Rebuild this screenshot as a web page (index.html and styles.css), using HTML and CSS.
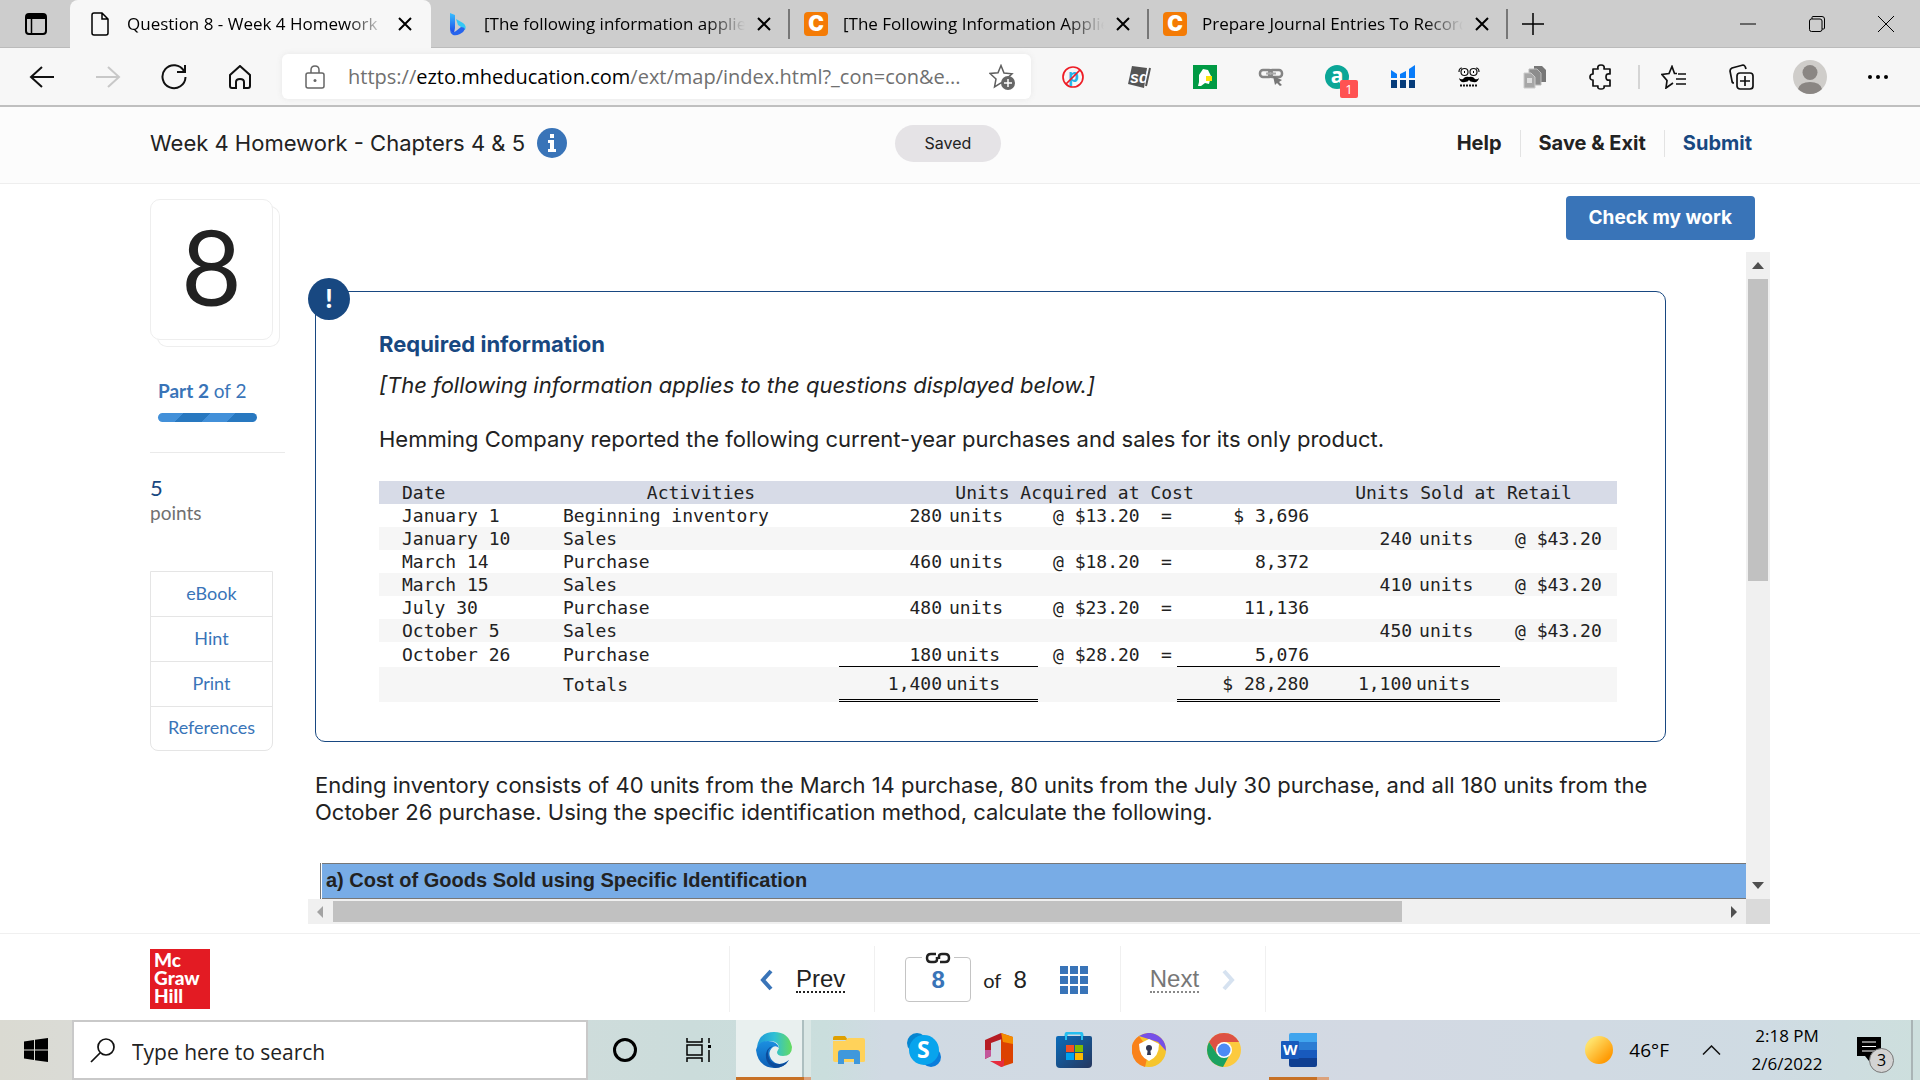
FILE: index.html
```html
<!DOCTYPE html>
<html lang="en">
<head>
  <meta charset="UTF-8">
  <title>Question 8 - Week 4 Homework - Chapters 4 &amp; 5</title>
  <link rel="stylesheet" href="styles.css">
</head>
<body>

  <!-- Browser tabs -->
  <div class="tabstrip">
    <button class="tab-actions" aria-label="Tab actions">
      <svg width="22" height="22" viewBox="0 0 22 22"><rect x="1" y="1" width="20" height="20" rx="3" fill="none" stroke="#000" stroke-width="2"/><path d="M1 1h20v5H1z"/><path d="M6.500 6v15" stroke="#000" stroke-width="1.500"/></svg>
    </button>
    <div class="tab active">
      <svg class="tab-icon" width="20" height="24" viewBox="0 0 20 24"><path d="M2 3q0-2 2-2h8l6 6v14q0 2-2 2H4q-2 0-2-2zM12 1v6h6" fill="none" stroke="#000" stroke-width="1.500"/></svg>
      <span class="tab-title">Question 8 - Week 4 Homework</span>
      <button class="tab-close" aria-label="Close tab"><svg width="14" height="14" viewBox="0 0 14 14"><path d="M1 1l12 12M13 1L1 13"/></svg></button>
    </div>
    <div class="tab">
      <svg class="tab-icon" width="24" height="24" viewBox="-4 0 24 24"><defs><linearGradient id="bing" x2="0" y2="1"><stop stop-color="#38c0ff"/><stop offset="1" stop-color="#1b48e8"/></linearGradient></defs><path d="M1 1l5 2v13l-1 5q-4-1-4-4z" fill="url(#bing)"/><path d="M7 7l7 4q4 3 2 7-1-2-4-3l-3-2z" fill="#35c8f5"/><path d="M1 18q2 4 6 1l5-4q3 0 4 2-1 3-5 5-4 2-7 1-3-2-3-5z" fill="#2764ed"/></svg>
      <span class="tab-title">[The following information applies</span>
      <button class="tab-close" aria-label="Close tab"><svg width="14" height="14" viewBox="0 0 14 14"><path d="M1 1l12 12M13 1L1 13"/></svg></button>
    </div>
    <div class="tab">
      <span class="chegg">C</span>
      <span class="tab-title">[The Following Information Applies</span>
      <button class="tab-close" aria-label="Close tab"><svg width="14" height="14" viewBox="0 0 14 14"><path d="M1 1l12 12M13 1L1 13"/></svg></button>
    </div>
    <div class="tab">
      <span class="chegg">C</span>
      <span class="tab-title">Prepare Journal Entries To Record</span>
      <button class="tab-close" aria-label="Close tab"><svg width="14" height="14" viewBox="0 0 14 14"><path d="M1 1l12 12M13 1L1 13"/></svg></button>
    </div>
    <button class="new-tab" aria-label="New tab"><svg width="22" height="22" viewBox="0 0 22 22"><path d="M11 0v22M0 11h22" stroke="#000" stroke-width="1.500"/></svg></button>
    <div class="window-buttons">
      <button aria-label="Minimize"><svg width="16" height="16" viewBox="0 0 16 16"><path d="M0 8h16"/></svg></button>
      <button aria-label="Restore"><svg width="16" height="16" viewBox="0 0 16 16"><path d="M3 3V1.500q0-1 1-1h9q2.500 0 2.500 2.500v9q0 1-1 1H13"/><rect x=".5" y="3" width="12.500" height="12.500" rx="2"/></svg></button>
      <button aria-label="Close window"><svg width="16" height="16" viewBox="0 0 16 16"><path d="M0 0l16 16M16 0L0 16"/></svg></button>
    </div>
  </div>

  <!-- Address bar and extensions -->
  <div class="toolbar">
    <div class="nav-buttons">
      <button aria-label="Back"><svg width="26" height="24" viewBox="0 0 26 24"><path d="M25 12H2M13 2L2 12l11 10"/></svg></button>
      <button aria-label="Forward" disabled><svg width="26" height="24" viewBox="0 0 26 24"><path d="M1 12h23M13 2l11 10-11 10"/></svg></button>
      <button aria-label="Refresh"><svg width="26" height="26" viewBox="0 0 26 26"><path d="M23 7A11.500 11.500 0 1 0 24.500 13M24 1v7h-8"/></svg></button>
      <button aria-label="Home"><svg width="24" height="24" viewBox="0 0 24 24"><path d="M2 10L12 1l10 9v11q0 2-2 2h-4v-6q0-3-4-3t-4 3v6H4q-2 0-2-2z"/></svg></button>
    </div>
    <div class="address">
      <svg width="20" height="24" viewBox="0 0 20 24"><g fill="none" stroke="#666" stroke-width="1.500"><rect x="1" y="8" width="18" height="15" rx="2"/><path d="M6 8V5q0-4 4-4t4 4v3"/></g><circle cx="10" cy="15.500" r="1.500" fill="#666"/></svg>
      <span class="url">https://<b>ezto.mheducation.com</b>/ext/map/index.html?_con=con&amp;e...</span>
      <button aria-label="Add to favorites"><svg width="26" height="26" viewBox="0 0 26 26"><path d="M12 1.500l3 7.500 8 .8-6 5.500-5 3.700-6.500 4 1.500-8-6-5.500 8-.8z" fill="none" stroke="#5f5f5f" stroke-width="1.500"/><circle cx="19" cy="19" r="7" fill="#666"/><path d="M19 15v8M15 19h8" stroke="#fff" stroke-width="1.500"/></svg></button>
    </div>
    <div class="extensions">
      <button aria-label="Ad blocker"><svg width="24" height="24" viewBox="0 0 24 24"><text x="7" y="17" class="ext-p">p</text><circle cx="12" cy="12" r="10" fill="none" stroke="#ee1c25" stroke-width="1.700"/><path d="M19 5L5 19" stroke="#ee1c25" stroke-width="1.700"/></svg></button>
      <button aria-label="SD"><svg width="26" height="24" viewBox="0 0 26 24"><path d="M6 1l15 2-3 20-16-4z" fill="#555"/><text x="4" y="18" class="ext-sd">sd</text><path d="M24 3l-4 18" stroke="#555" stroke-width="2"/></svg></button>
      <button aria-label="Tag saver"><svg width="24" height="24" viewBox="0 0 24 24"><path d="M0 0h24v24H0z" fill="#009a44"/><path d="M6 10l4-6 5 1 3 6-2 8-4-1-4 3H5l1-4z" fill="#fff"/><path d="M13 11h6v5h-6z" fill="#fbe30a"/></svg></button>
      <button aria-label="Links"><svg width="26" height="20" viewBox="0 0 26 20"><g fill="none" stroke="#858585" stroke-width="2.500"><rect x="2" y="3" width="12" height="7" rx="3"/><rect x="11" y="3" width="13" height="7" rx="3"/></g><path d="M8 6.500h10" stroke="#aaa" stroke-width="2"/><path d="M15 9l9 4-3 2 3 3-2 1-3-3-2 2z" fill="#777"/></svg></button>
      <button class="ext-a" aria-label="a"><span class="circle-a">a</span><span class="count">1</span></button>
      <button aria-label="Statistics"><svg width="24" height="24" viewBox="0 0 24 24"><path d="M0 5l6 4v4H0zm9 4l6-3v7H9zm9-5l6-4v13h-6z" fill="#087cf9"/><path d="M0 15h6v8H0zm9 0h6v8H9zm9 0h6v8h-6z" fill="#063c7a"/></svg></button>
      <button aria-label="Mustache"><svg width="22" height="20" viewBox="0 0 22 20"><g fill="none" stroke="#111" stroke-width="1.200"><circle cx="6.500" cy="5" r="3.500"/><circle cx="15.500" cy="5" r="3.500"/><path d="M1 5q0-4 3-4M21 5q0-4-3-4"/></g><path d="M6 4h1v2H6zM15 4h1v2h-1z"/><path d="M11 10q4-1 6 2 2 1 4-1-1 5-6 4-3 0-4-2-1 2-4 2-5 1-6-4 2 2 4 1 2-3 6-2z"/><path d="M2 18.500h18" stroke="#111" stroke-width="2" stroke-dasharray="2 1"/></svg></button>
      <button aria-label="Copy pages"><svg width="24" height="24" viewBox="0 0 24 24"><path d="M11 1h8l4 4v12H11z" fill="#777"/><path d="M6 4h8l4 4v12H6z" fill="#8d8d8d" stroke="#bbb"/><path d="M1 8h7l4 4v11H1z" fill="#a7a7a7" stroke="#ccc"/><path d="M4 13h5v5H4z" fill="#ddd"/></svg></button>
      <button aria-label="Extensions"><svg width="24" height="26" viewBox="0 0 24 26"><path d="M4 5h5q-1-4 3-4t3 4h6v5q-4-1-4 3t4 3v6h-6q1 3-3 3t-3-3H4v-6q-3 0-3-3t3-3z" fill="none" stroke="#111" stroke-width="1.700" stroke-linejoin="round"/></svg></button>
    </div>
    <div class="browser-tools">
      <button aria-label="Favorites"><svg width="26" height="24" viewBox="0 0 26 24"><path d="M16 8.500h-2.500l-2.500-7-3 7-7 1 5 6-1 7.500 7-5M17 9h8M15 14h10M15 19h10" fill="none" stroke="#111" stroke-width="1.700"/></svg></button>
      <button aria-label="Collections"><svg width="26" height="26" viewBox="0 0 26 26"><g fill="none" stroke="#111" stroke-width="1.700"><rect x="8" y="9" width="16" height="16" rx="3"/><path d="M16 12v10M11 17h10M5 19q-2 0-2-2L1 7q0-2 2-3l11-3q2 0 3 4"/></g></svg></button>
      <button aria-label="Profile"><svg width="34" height="34" viewBox="0 0 34 34"><circle cx="17" cy="17" r="17" fill="#cfcdca"/><circle cx="17" cy="12.500" r="7.500" fill="#8a8683"/><path d="M5 29q2-7 12-7t12 7q-5 5-12 5T5 29z" fill="#8a8683"/></svg></button>
      <button aria-label="Settings"><svg width="20" height="4" viewBox="0 0 20 4"><circle cx="2" cy="2" r="2"/><circle cx="10" cy="2" r="2"/><circle cx="18" cy="2" r="2"/></svg></button>
    </div>
  </div>

  <!-- Assignment header -->
  <header class="assignment">
    <div class="assignment-title">
      <h1>Week 4 Homework - Chapters 4 &amp; 5</h1>
      <button aria-label="Assignment information"><svg width="30" height="30" viewBox="0 0 30 30"><circle cx="15" cy="15" r="15" fill="#3974b8"/><path d="M13 6h4v4h-4zM11 12h6v9h2v3h-8v-3h2v-6h-2z" fill="#fff"/></svg></button>
    </div>
    <span class="saved">Saved</span>
    <nav>
      <a href="#">Help</a>
      <a href="#">Save &amp; Exit</a>
      <a href="#" class="submit">Submit</a>
    </nav>
  </header>

  <main class="workspace">
    <aside>
      <div class="question-card">8</div>
      <div class="part">
        <div><strong>Part 2</strong> of 2</div>
        <div class="part-bar"></div>
      </div>
      <div class="points"><strong>5</strong><span>points</span></div>
      <div class="resources">
        <button>eBook</button>
        <button>Hint</button>
        <button>Print</button>
        <button>References</button>
      </div>
    </aside>

    <section class="question">
      <button class="check-work">Check my work</button>

      <div class="frame">
        <div class="pane">
          <div class="required">
            <span class="alert-badge">!</span>
            <h2>Required information</h2>
            <p class="applies">[The following information applies to the questions displayed below.]</p>
            <p class="company">Hemming Company reported the following current-year purchases and sales for its only product.</p>

            <table class="inventory">
              <colgroup>
                <col class="c-date"><col class="c-activity"><col class="c-number"><col class="c-units"><col class="c-cost">
                <col class="c-equals"><col class="c-amount"><col class="c-sold"><col class="c-sold-units"><col class="c-retail">
              </colgroup>
              <thead>
                <tr><th class="date">Date</th><th>Activities</th><th colspan="5">Units Acquired at Cost</th><th colspan="3">Units Sold at Retail</th></tr>
              </thead>
              <tbody>
                <tr><td class="date">January 1</td><td>Beginning inventory</td><td class="num">280</td><td class="units">units</td><td class="at">@ $13.20</td><td class="equals">=</td><td class="num">$ 3,696</td><td></td><td></td><td></td></tr>
                <tr><td class="date">January 10</td><td>Sales</td><td></td><td></td><td></td><td></td><td></td><td class="num">240</td><td class="units">units</td><td class="at">@ $43.20</td></tr>
                <tr><td class="date">March 14</td><td>Purchase</td><td class="num">460</td><td class="units">units</td><td class="at">@ $18.20</td><td class="equals">=</td><td class="num">8,372</td><td></td><td></td><td></td></tr>
                <tr><td class="date">March 15</td><td>Sales</td><td></td><td></td><td></td><td></td><td></td><td class="num">410</td><td class="units">units</td><td class="at">@ $43.20</td></tr>
                <tr><td class="date">July 30</td><td>Purchase</td><td class="num">480</td><td class="units">units</td><td class="at">@ $23.20</td><td class="equals">=</td><td class="num">11,136</td><td></td><td></td><td></td></tr>
                <tr><td class="date">October 5</td><td>Sales</td><td></td><td></td><td></td><td></td><td></td><td class="num">450</td><td class="units">units</td><td class="at">@ $43.20</td></tr>
                <tr class="last"><td class="date">October 26</td><td>Purchase</td><td class="num line">180</td><td class="units line">units</td><td class="at">@ $28.20</td><td class="equals">=</td><td class="num line">5,076</td><td class="line"></td><td class="line"></td><td></td></tr>
                <tr class="totals"><td></td><td>Totals</td><td class="num double">1,400</td><td class="units double">units</td><td></td><td></td><td class="num double">$ 28,280</td><td class="num double">1,100</td><td class="units double">units</td><td></td></tr>
              </tbody>
            </table>
          </div>

          <p class="ending">Ending inventory consists of 40 units from the March 14 purchase, 80 units from the July 30 purchase, and all 180 units from the October 26 purchase. Using the specific identification method, calculate the following.</p>

          <div class="answer"><h3>a) Cost of Goods Sold using Specific Identification</h3></div>
        </div>
        <div class="scroll-y">
          <svg width="12" height="7" viewBox="0 0 12 7"><path d="M0 7l6-7 6 7z" fill="#505050"/></svg>
          <div class="track-y"><div class="thumb-y"></div></div>
          <svg width="12" height="7" viewBox="0 0 12 7"><path d="M0 0h12L6 7z" fill="#505050"/></svg>
        </div>
        <div class="scroll-x">
          <svg width="6" height="12" viewBox="0 0 6 12"><path d="M6 0v12L0 6z" fill="#a3a3a3"/></svg>
          <div class="track-x"><div class="thumb-x"></div></div>
          <svg width="6" height="12" viewBox="0 0 6 12"><path d="M0 0v12l6-6z" fill="#505050"/></svg>
        </div>
        <div class="scroll-corner"></div>
      </div>
    </section>
  </main>

  <footer class="pager">
    <div class="mgh">Mc<br>Graw<br>Hill</div>
    <div class="pager-nav">
      <a href="#" class="pager-cell prev">
        <svg width="14" height="22" viewBox="0 0 14 22"><path d="M12 2L4 11l8 9" fill="none" stroke="#3974b8" stroke-width="4"/></svg>
        <span>Prev</span>
      </a>
      <div class="pager-cell pages">
        <div class="page-box">
          <input type="text" id="page" value="8">
          <svg class="chain" width="32" height="12" viewBox="0 0 32 12"><path d="M0 0h32v12H0z" fill="#fff"/><path d="M14 2H9q-4 0-4 4t4 4h3q3 0 3-2.500V5M18 10h5q4 0 4-4t-4-4h-3q-3 0-3 2.500V7" fill="none" stroke="#222" stroke-width="2.500"/></svg>
        </div>
        <label for="page">of</label>
        <span class="page-total">8</span>
        <button aria-label="All questions"><svg width="28" height="28" viewBox="0 0 28 28"><path d="M0 0h8v8H0zM10 0h8v8h-8zM20 0h8v8h-8zM0 10h8v8H0zM10 10h8v8h-8zM20 10h8v8h-8zM0 20h8v8H0zM10 20h8v8h-8zM20 20h8v8h-8z" fill="#3974b8"/></svg></button>
      </div>
      <a href="#" class="pager-cell next">
        <span>Next</span>
        <svg width="14" height="22" viewBox="0 0 14 22"><path d="M2 2l8 9-8 9" fill="none" stroke="#d6e2f0" stroke-width="4"/></svg>
      </a>
    </div>
  </footer>

  <!-- Windows taskbar -->
  <div class="taskbar">
    <button class="start" aria-label="Start"><svg width="24" height="24" viewBox="0 0 24 24"><path d="M0 3.500l10-1.500v9.500H0zM11 1.800L24 0v11.500H11zM0 12.500h10V22L0 20.500zM11 12.500h13V24l-13-1.800z"/></svg></button>
    <label class="search">
      <svg width="25" height="25" viewBox="0 0 25 25"><circle cx="16" cy="9" r="8" fill="none" stroke="#111" stroke-width="1.700"/><path d="M10 15L1 24" stroke="#111" stroke-width="1.700"/></svg>
      <input type="text" placeholder="Type here to search" aria-label="Type here to search">
    </label>
    <div class="apps">
      <button aria-label="Cortana"><svg width="26" height="26" viewBox="0 0 26 26"><circle cx="13" cy="13" r="10.500" fill="none" stroke="#000" stroke-width="3"/></svg></button>
      <button aria-label="Task view"><svg width="26" height="24" viewBox="0 0 26 24"><path d="M1 0v4h15V0M1 24v-4h15v4M1 7h15v10H1zM23 0v5M23 12v12" fill="none" stroke="#000" stroke-width="1.500"/><path d="M22 7h3v3h-3z"/></svg></button>
      <button class="app edge" aria-label="Edge"><svg width="36" height="36" viewBox="0 0 36 36"><defs><linearGradient id="edgeTop" x2="1"><stop stop-color="#1d98d8"/><stop offset=".5" stop-color="#30bfd5"/><stop offset="1" stop-color="#65dc5e"/></linearGradient><linearGradient id="edgeLow" x2="0" y2="1"><stop stop-color="#1b8fe0"/><stop offset="1" stop-color="#0d5fb6"/></linearGradient></defs><path d="M1 15Q3 0 18 0t18 15q0 9-9 9-6 0-6-4l2-4q0-6-8-7-9 0-14 6z" fill="url(#edgeTop)"/><path d="M0 18Q2 9 12 9q9 0 11 7-3-3-6-1-6 5-2 12 6 8 15 3l3-2q-5 8-15 8Q2 35 0 18z" fill="url(#edgeLow)"/><path d="M12 20q0 13 12 12 5 0 9-4-5 8-14 8-8-3-9-10-1-10 7-12-5 3-5 6z" fill="#0c4c9b"/></svg></button>
      <button class="app" aria-label="File Explorer"><svg width="32" height="28" viewBox="0 0 32 28"><path d="M0 2q0-2 2-2h10l3 4H0z" fill="#dfa000"/><path d="M0 5h12l3-3h15q2 0 2 2v21q0 1-2 1H2q-2 0-2-2z" fill="#ffd25a"/><path d="M5 28V17q0-3 3-3h16q3 0 3 3v11h-6v-5H11v5z" fill="#3f98dc"/></svg></button>
      <button class="app" aria-label="Skype"><svg width="34" height="34" viewBox="0 0 34 34"><circle cx="10" cy="10" r="10" fill="#0785d0"/><circle cx="24" cy="24" r="10" fill="#0a7ddb"/><circle cx="17" cy="17" r="15" fill="#08a4ed"/><text x="10" y="25" class="skype-s">S</text></svg></button>
      <button class="app" aria-label="Office"><svg width="28" height="34" viewBox="0 0 28 34"><path d="M16 0l12 4v26l-12 4z" fill="#dc4200"/><path d="M16 0l12 4v7l-10-2z" fill="#f48c00"/><path d="M16 0L0 7v19l6-3V10l11-4z" fill="#b61c24"/><path d="M0 17v9l6-3v-6z" fill="#c3569a"/><path d="M5 28h12l2-3v8l-3 1z" fill="#e62c3e"/></svg></button>
      <button class="app" aria-label="Microsoft Store"><svg width="36" height="36" viewBox="0 0 36 36"><defs><linearGradient id="store" x2="1" y2="1"><stop stop-color="#0a6cbb"/><stop offset="1" stop-color="#26375e"/></linearGradient></defs><path d="M10 8V3q0-2 2-2h12q2 0 2 2v5" fill="none" stroke="#25bff0" stroke-width="3"/><path d="M0 6q0-2 2-2h32q2 0 2 2v26q0 4-4 4H4q-4 0-4-4z" fill="url(#store)"/><path d="M10 8V3M26 8V3" stroke="#25bff0" stroke-width="2"/><path d="M10 13h8v7h-8z" fill="#f25022"/><path d="M19 13h8v7h-8z" fill="#7fba00"/><path d="M10 21h8v7h-8z" fill="#00a4ef"/><path d="M19 21h8v7h-8z" fill="#ffb900"/></svg></button>
      <button class="app" aria-label="Secure Browser"><svg width="34" height="34" viewBox="0 0 34 34"><circle cx="17" cy="17" r="17" fill="#f6c52d"/><path d="M17 17L7 3Q-2 9 0 20t13 14z" fill="#f9821b"/><path d="M7 3q12-7 22 2 5 5 5 13L26 9z" fill="#7650e8"/><path d="M17 6l10 5q0 13-10 17Q7 24 7 11z" fill="#fff"/><circle cx="17" cy="15" r="3" fill="#313653"/><path d="M16 15h2l1 7h-4z" fill="#313653"/></svg></button>
      <button class="app" aria-label="Chrome"><svg width="34" height="34" viewBox="0 0 34 34"><circle cx="17" cy="17" r="17" fill="#fcca3f"/><path d="M2 9q5-9 15-9t15 9H17L10 21z" fill="#dd5144"/><path d="M2 9q-4 8 0 16 5 8 14 9l7-13-13 0z" fill="#1ba261"/><circle cx="17" cy="17" r="8" fill="#fff"/><circle cx="17" cy="17" r="6.500" fill="#4c8bf5"/></svg></button>
      <button class="app word" aria-label="Word"><svg width="36" height="34" viewBox="0 0 36 34"><path d="M8 2q0-2 2-2h26v9H8z" fill="#41a5ee"/><path d="M8 9h28v8H8z" fill="#2b7cd3"/><path d="M8 17h28v8H8z" fill="#185abd"/><path d="M8 25h28v7q0 2-2 2H10q-2 0-2-2z" fill="#103f91"/><rect y="8" width="18" height="18" rx="1" fill="#185abd"/><text x="2" y="22" class="word-w">W</text></svg></button>
    </div>
    <div class="tray">
      <svg width="28" height="28" viewBox="0 0 28 28"><defs><linearGradient id="sun" x2="1" y2="1"><stop offset=".2" stop-color="#ffe169"/><stop offset=".8" stop-color="#ff9b05"/></linearGradient></defs><circle cx="14" cy="14" r="14" fill="url(#sun)"/></svg>
      <span class="temp">46°F</span>
      <svg width="19" height="10" viewBox="0 0 19 10"><path d="M1 9.500l8.500-8.500 8.500 8.500" fill="none" stroke="#111" stroke-width="1.500"/></svg>
      <div class="clock"><span>2:18 PM</span><span>2/6/2022</span></div>
      <button class="notifications" aria-label="Notifications"><svg width="24" height="26" viewBox="0 0 24 26"><path d="M0 0h24v19h-8l-4 5-4-5H0z"/><path d="M5 5h14M5 9.500h14M5 14h14" stroke="#fff" stroke-width="1.200"/></svg><span>3</span></button>
    </div>
  </div>

</body>
</html>
```
FILE: styles.css
```css
* {
  box-sizing: border-box;
}

body {
  margin: 0;
  min-height: 100vh;
  display: flex;
  flex-direction: column;
  font-family: Inter, "Open Sans", sans-serif;
  font-size: 22px;
  line-height: 27px;
  color: #222;
  background: #fff;
}

h1, h2, h3, p {
  margin: 0;
}

button {
  padding: 0;
  border: none;
  background: none;
  font: inherit;
  color: inherit;
  cursor: pointer;
}

a {
  color: inherit;
  text-decoration: none;
}

svg {
  display: block;
  flex: none;
}

/* browser chrome */
.tabstrip, .toolbar, .taskbar {
  font-family: "Open Sans", "Noto Sans", sans-serif;
  color: #000;
}

.tabstrip {
  display: flex;
  align-items: center;
  height: 48px;
  background: #cdcdcd;
  border-bottom: 1px solid #bbb;
}

.tab-actions {
  width: 70px;
  padding-left: 25px;
}

.tab {
  display: flex;
  align-items: center;
  width: 359px;
  height: 30px;
  padding: 0 17px 0 14px;
  border-right: 2px solid #777;
  font-size: 17px;
}

.tab.active {
  width: 361px;
  height: 48px;
  padding: 0 19px 0 18px;
  border-right: none;
  border-radius: 8px 8px 0 0;
  background: #f7f7f7;
}

.tab-icon {
  width: 24px;
}

.tab-title {
  flex: 1;
  margin: 0 12px 0 15px;
  overflow: hidden;
  white-space: nowrap;
  mask-image: linear-gradient(to right, #000 85%, transparent);
}

.tab-close svg {
  stroke: #000;
  stroke-width: 2;
}

.chegg {
  width: 24px;
  height: 24px;
  border-radius: 4px;
  background: #f47b05;
  color: #fff;
  font: 900 21px/24px Inter, sans-serif;
  text-align: center;
}

.new-tab {
  margin-left: 14px;
}

.window-buttons {
  display: flex;
  margin-left: auto;
}

.window-buttons button {
  display: grid;
  place-items: center;
  width: 69px;
  height: 47px;
}

.window-buttons svg {
  fill: none;
  stroke: #000;
}

.toolbar {
  display: flex;
  align-items: center;
  height: 59px;
  background: #f7f7f7;
  border-bottom: 2px solid #bfbfbf;
}

.nav-buttons {
  display: flex;
  margin-left: 9px;
}

.nav-buttons button {
  display: grid;
  place-items: center;
  width: 66px;
}

.nav-buttons svg {
  fill: none;
  stroke: #111;
  stroke-width: 2;
}

.nav-buttons button:disabled {
  opacity: 0.2;
}

.address {
  display: flex;
  flex: 1;
  align-items: center;
  height: 45px;
  margin: 0 9px;
  padding: 0 16px 0 23px;
  border-radius: 6px;
  background: #fff;
  box-shadow: 0 0 6px #e8e8e8;
}

.url {
  flex: 1;
  margin-left: 23px;
  font-size: 20px;
  color: #707070;
  white-space: nowrap;
}

.url b {
  font-weight: normal;
  color: #000;
}

.extensions, .browser-tools {
  display: flex;
  align-items: center;
}

.extensions {
  padding-right: 4px;
  border-right: 2px solid #d5d5d5;
  height: 24px;
}

.extensions button {
  display: grid;
  place-items: center;
  width: 66px;
}

.browser-tools {
  padding-right: 8px;
}

.browser-tools button {
  display: grid;
  place-items: center;
  width: 68px;
}

.ext-p {
  font: bold 17px "Open Sans", sans-serif;
  fill: #28b3e8;
}

.ext-sd {
  font: italic bold 16px "Liberation Sans", sans-serif;
  fill: #fff;
}

.ext-a {
  position: relative;
}

.circle-a {
  width: 24px;
  height: 24px;
  border-radius: 50%;
  background: #0ba697;
  color: #fff;
  font: bold 21px/21px "Open Sans", sans-serif;
}

.count {
  position: absolute;
  top: 15px;
  right: 12px;
  width: 18px;
  height: 18px;
  border-radius: 2px;
  background: #ff5252;
  color: #fff;
  font-size: 13px;
  line-height: 18px;
}

/* assignment header */
.assignment {
  display: grid;
  grid-template-columns: 1fr auto 1fr;
  align-items: center;
  height: 77px;
  padding: 0 174px 4px 150px;
  background: #fcfcfc;
  border-bottom: 1px solid #eee;
}

.assignment-title {
  display: flex;
  align-items: center;
  gap: 12px;
}

.assignment h1 {
  font-size: 22px;
  font-weight: normal;
}

.saved {
  padding: 5px 30px;
  border-radius: 19px;
  background: #e5e3e6;
  font-size: 16px;
}

.assignment nav {
  display: flex;
  justify-content: flex-end;
  margin-right: -6px;
  font-size: 20px;
  font-weight: bold;
}

.assignment nav a {
  padding-left: 18px;
}

.assignment nav a + a {
  margin-left: 18px;
  border-left: 1px solid #e3e3e3;
}

.assignment .submit {
  color: #184881;
}

/* question area */
.workspace {
  display: flex;
  flex: 1;
  padding: 0 150px 9px;
}

aside {
  width: 158px;
  padding-top: 15px;
  font-family: Lato, sans-serif;
}

.question-card {
  width: 123px;
  height: 141px;
  border: 1px solid #eee;
  border-radius: 10px;
  background: #fff;
  box-shadow: 7px 7px 0 -1px #fff, 7px 7px 0 0 #eee;
  font-size: 104px;
  line-height: 132px;
  text-align: center;
}

.part {
  width: 135px;
  margin-top: 37px;
  padding: 0 8px 30px;
  border-bottom: 1px solid #eaeaea;
  color: #3974b8;
  font-size: 19px;
}

.part-bar {
  width: 99px;
  height: 9px;
  margin-top: 9px;
  border-radius: 5px;
  background: repeating-linear-gradient(135deg, #4290d9 0 18px, #2878c0 18px 37px);
}

.points {
  display: flex;
  flex-direction: column;
  margin-top: 22px;
  color: #707070;
  font-size: 19px;
  line-height: 25px;
}

.points strong {
  color: #184881;
  font-size: 22px;
  font-weight: normal;
}

.resources {
  display: flex;
  flex-direction: column;
  width: 123px;
  margin-top: 46px;
  border: 1px solid #e5e5e5;
  border-radius: 0 0 8px 8px;
}

.resources button {
  height: 45px;
  padding-bottom: 2px;
  border-bottom: 1px solid #e5e5e5;
  color: #3974b8;
  font-size: 18px;
}

.resources button:last-child {
  height: 43px;
  border-bottom: none;
}

.question {
  display: flex;
  flex: 1;
  flex-direction: column;
  min-width: 0;
}

.check-work {
  align-self: flex-end;
  height: 44px;
  margin: 12px 15px 12px 0;
  padding: 0 23px 2px;
  border-radius: 4px;
  background: #3974b8;
  color: #fff;
  font-size: 19px;
  font-weight: bold;
}

.frame {
  display: grid;
  flex: 1;
  grid-template-columns: minmax(0, 1fr) 24px;
  grid-template-rows: 1fr 25px;
}

.pane {
  padding: 39px 0 0 7px;
  overflow: hidden;
}

.required {
  position: relative;
  margin-right: 80px;
  padding: 39px 49px 39px 63px;
  border: 1px solid #184881;
  border-radius: 10px;
}

.alert-badge {
  position: absolute;
  top: -14px;
  left: -8px;
  width: 42px;
  height: 42px;
  border-radius: 50%;
  background: #184881;
  color: #fff;
  font: 900 26px/40px Lato, sans-serif;
  text-align: center;
}

.required h2 {
  color: #184881;
  font-size: 22px;
}

.applies {
  margin-top: 14px;
  font-style: italic;
}

.company {
  margin-top: 27px;
}

.inventory {
  width: 100%;
  margin-top: 28px;
  border-collapse: separate;
  border-spacing: 0;
  table-layout: fixed;
  font: 18px/23px "DejaVu Sans Mono", monospace;
}

.c-date { width: 184px; }
.c-activity { width: 276px; }
.c-number { width: 104px; }
.c-units { width: 95px; }
.c-cost { width: 110px; }
.c-equals { width: 29px; }
.c-amount { width: 133px; }
.c-sold { width: 103px; }
.c-sold-units { width: 87px; }
.c-retail { width: 117px; }

.inventory th, .inventory td {
  height: 23px;
  padding: 0;
  font-weight: normal;
  text-align: left;
  white-space: nowrap;
}

.inventory th {
  background: #d7dbe7;
  text-align: center;
}

.inventory .date {
  padding-left: 23px;
  text-align: left;
}

.inventory .num {
  padding-right: 1px;
  text-align: right;
}

.inventory .units {
  padding-left: 6px;
}

.inventory .at {
  padding-left: 15px;
}

.inventory .equals {
  padding-left: 13px;
}

.inventory tbody tr:nth-child(even) {
  background: #f6f6f6;
}

.inventory .last td {
  height: 25px;
}

.inventory .totals td {
  height: 35px;
}

.inventory .line {
  border-bottom: 1px solid #000;
}

.inventory .double {
  border-bottom: 3px double #000;
}

.inventory .units.line, .inventory .units.double {
  padding-left: 3px;
}

.ending {
  margin: 30px 80px 37px 0;
}

.answer {
  margin-left: 5px;
  border-left: 1px solid #777;
  padding-left: 1px;
}

.answer h3 {
  padding: 4px 4px 5px;
  border-top: 1px solid #777;
  border-bottom: 1px solid #777;
  background: #78ace6;
  font: bold 20px/25px "Liberation Sans", Arial, sans-serif;
}

.scroll-y, .scroll-x {
  display: flex;
  align-items: center;
  background: #f0f0f0;
}

.scroll-y {
  flex-direction: column;
  padding: 10px 0;
}

.track-y {
  flex: 1;
  width: 20px;
  margin: 10px 0;
}

.thumb-y {
  height: 51%;
  background: #c1c1c1;
}

.scroll-x {
  padding: 0 9px;
}

.track-x {
  flex: 1;
  height: 21px;
  margin: 0 10px;
}

.thumb-x {
  width: 77%;
  height: 21px;
  background: #c1c1c1;
}

.scroll-corner {
  background: #dadada;
}

/* question pager */
.pager {
  display: grid;
  grid-template-columns: 1fr auto 1fr;
  align-items: center;
  height: 87px;
  padding: 3px 75px 0 150px;
  border-top: 1px solid #f0f0f0;
}

.mgh {
  width: 60px;
  height: 60px;
  padding: 2px 4px;
  background: #e31b23;
  color: #fff;
  font: 900 19px/18px Lato, sans-serif;
}

.pager-nav {
  display: flex;
  font: 24px/27px "Liberation Sans", Arial, sans-serif;
}

.pager-cell {
  display: flex;
  align-items: center;
  height: 66px;
  padding: 2px 29px 0;
  border-right: 1px solid #f0f0f0;
}

.pages {
  padding-left: 30px;
  padding-right: 32px;
}

.prev {
  border-left: 1px solid #f0f0f0;
}

.prev, .next {
  gap: 23px;
}

.prev span, .next span {
  border-bottom: 2px dotted #222;
  line-height: 25px;
}

.next span {
  border-color: #888;
  color: #777;
}

.page-box {
  position: relative;
}

.page-box input {
  display: block;
  width: 66px;
  height: 45px;
  border: 1px solid #c4c4c4;
  border-radius: 4px;
  color: #3974b8;
  font: bold 24px "Liberation Sans", Arial, sans-serif;
  text-align: center;
}

.chain {
  position: absolute;
  top: -5px;
  left: 17px;
}

.pages label {
  margin-left: 12px;
  font: 20px Lato, sans-serif;
}

.page-total {
  margin: 0 33px 0 12px;
}

/* taskbar */
.taskbar {
  display: flex;
  height: 60px;
  background: linear-gradient(to right, #dadad2, #dadddc 10%, #cbdcdb 36%, #cadedd 43%, #d0dae3 46%, #d3d9e3 72%, #cfdbe3 92%, #cddfdd);
}

.start {
  width: 72px;
  padding-left: 24px;
}

.search {
  display: flex;
  align-items: center;
  gap: 17px;
  width: 516px;
  padding-left: 16px;
  border: 2px solid #c9c9c9;
  background: #fff;
}

.search input {
  flex: 1;
  padding: 3px 0 0;
  border: none;
  outline: none;
  font: 21px "Open Sans", sans-serif;
}

.search input::placeholder {
  color: #222;
}

.apps {
  display: flex;
}

.apps button {
  display: grid;
  place-items: center;
  width: 74px;
}

.apps .app {
  width: 75px;
}

.apps .edge {
  background:
    linear-gradient(to right, #c77126 68px, #dca27c 68px) bottom / 100% 3px no-repeat,
    linear-gradient(to right, #e9f0ef 66px, #adbfc0 66px 68px, #dae7e5 68px);
}

.apps .word {
  background: linear-gradient(to right, transparent 8px, #c77126 8px 56px, #dca27c 56px 68px, transparent 68px) bottom / 100% 3px no-repeat;
}

.skype-s {
  font: bold 23px "Open Sans", sans-serif;
  fill: #fff;
}

.word-w {
  font: bold 15px "Open Sans", sans-serif;
  fill: #fff;
}

.tray {
  display: flex;
  align-items: center;
  margin-left: auto;
  margin-right: 7px;
  padding-right: 16px;
  border-right: 2px solid #a9b4b5;
}

.temp {
  margin: 0 33px 0 16px;
  font-size: 19px;
}

.clock {
  display: flex;
  flex-direction: column;
  width: 74px;
  margin: 0 33px 0 29px;
  font-size: 17px;
  line-height: 28px;
  text-align: center;
}

.notifications {
  position: relative;
  width: 38px;
}

.notifications span {
  position: absolute;
  top: 11px;
  left: 12px;
  width: 25px;
  height: 25px;
  border: 1px solid #777;
  border-radius: 50%;
  background: #d3d3d3;
  font-size: 16px;
  line-height: 23px;
}
```
